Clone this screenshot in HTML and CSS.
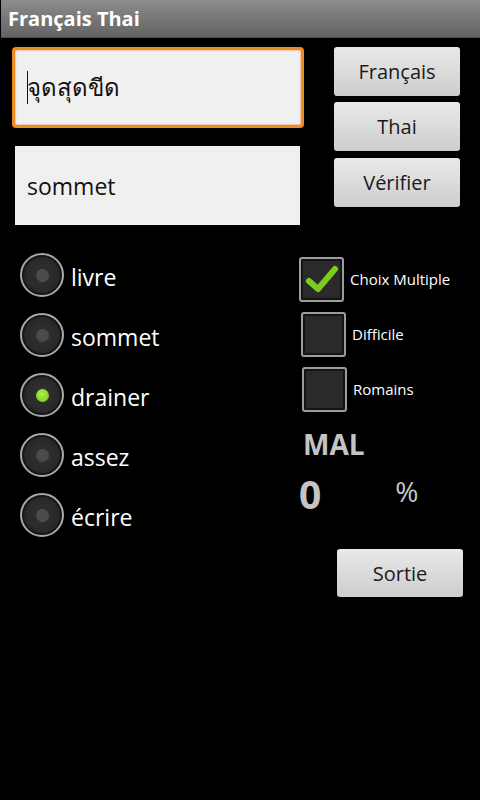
FILE: index.html
```html
<!DOCTYPE html>
<html lang="fr">
<head>
<meta charset="utf-8">
<title>Français Thai</title>
<link rel="stylesheet" href="styles.css">
</head>
<body>
<div class="titlebar">Français Thai</div>
<div class="top">
  <div class="fields">
    <div class="field focused"><span class="cursor"></span><span lang="th">จุดสุดขีด</span></div>
    <div class="field second">sommet</div>
  </div>
  <div class="buttons">
    <div class="btn">Français</div>
    <div class="btn">Thai</div>
    <div class="btn">Vérifier</div>
  </div>
</div>
<div class="middle">
  <div class="radios">
    <div class="radio-row"><span class="radio"><span class="dot"></span></span><span class="rlabel">livre</span></div>
    <div class="radio-row"><span class="radio"><span class="dot"></span></span><span class="rlabel">sommet</span></div>
    <div class="radio-row"><span class="radio"><span class="dot on"></span></span><span class="rlabel">drainer</span></div>
    <div class="radio-row"><span class="radio"><span class="dot"></span></span><span class="rlabel">assez</span></div>
    <div class="radio-row"><span class="radio"><span class="dot"></span></span><span class="rlabel">écrire</span></div>
  </div>
  <div class="side">
    <div class="check-row"><span class="box">
      <svg viewBox="0 0 45 45" width="45" height="45"><path d="M10 24 L19 32 L36 12" fill="none" stroke="#7ccc1c" stroke-width="6" stroke-linecap="round" stroke-linejoin="round"/></svg>
    </span><span class="clabel">Choix Multiple</span></div>
    <div class="check-row shift1"><span class="box"></span><span class="clabel">Difficile</span></div>
    <div class="check-row shift2"><span class="box"></span><span class="clabel">Romains</span></div>
    <div class="mal">MAL</div>
    <div class="score"><span class="zero">0</span><span class="pct">%</span></div>
    <div class="btn sortie">Sortie</div>
  </div>
</div>
</body>
</html>
```
FILE: styles.css
```css
html, body {
  margin: 0;
  padding: 0;
  background: #000;
}
body {
  width: 480px;
  height: 800px;
  font-family: "Open Sans", "Noto Sans", "DejaVu Sans", sans-serif;
  color: #fff;
  overflow: hidden;
}
.titlebar {
  height: 38px;
  box-sizing: border-box;
  margin-left: 1px;
  padding-left: 7px;
  background: linear-gradient(#8c8c8c, #636363);
  font-weight: bold;
  font-size: 20px;
  line-height: 38px;
  color: #fff;
  border-bottom: 1px solid #4a4a4a;
}
.top {
  display: flex;
  padding-top: 9px;
}
.fields {
  margin-left: 12px;
  width: 292px;
}
.field {
  box-sizing: border-box;
  background: #f0f0f0;
  color: #111;
  font-size: 23px;
  display: flex;
  align-items: center;
  padding-left: 12px;
}
.field.focused {
  height: 81px;
  border: 3px solid #f08a1c;
  border-radius: 4px;
  box-shadow: inset 0 0 2px #d07010;
  font-size: 24px;
}
.field.second {
  margin-top: 18px;
  margin-left: 3px;
  width: 285px;
  height: 79px;
}
.cursor {
  display: inline-block;
  width: 1px;
  height: 33px;
  background: #111;
  margin-right: -1px;
}
.buttons {
  margin-left: 30px;
  width: 126px;
  display: flex;
  flex-direction: column;
  gap: 6px;
}
.btn {
  height: 49px;
  box-sizing: border-box;
  background: linear-gradient(#e9e9e9, #cdcdcd);
  border-radius: 3px;
  color: #1a1a1a;
  font-size: 20px;
  display: flex;
  align-items: center;
  justify-content: center;
}
.buttons .btn:last-child {
  margin-top: 1px;
}
.middle {
  display: flex;
}
.radios {
  width: 299px;
  padding-left: 20px;
  box-sizing: border-box;
  padding-top: 20px;
}
.radio-row {
  height: 60px;
  display: flex;
  align-items: center;
}
.radio {
  width: 44px;
  height: 44px;
  box-sizing: border-box;
  border-radius: 50%;
  border: 2px solid #a8a8a8;
  background: radial-gradient(circle, #333 0%, #262626 70%, #1e1e1e 100%);
  box-shadow: inset 0 0 0 2px #151515;
  display: flex;
  align-items: center;
  justify-content: center;
}
.dot {
  width: 13px;
  height: 13px;
  border-radius: 50%;
  background: #4c4c4c;
}
.dot.on {
  background: radial-gradient(circle at 45% 40%, #aef04a, #7ed320 70%);
}
.rlabel {
  margin-left: 7px;
  font-size: 23px;
  color: #fff;
  padding-top: 3px;
}
.side {
  padding-top: 32px;
  flex: 1;
}
.check-row {
  height: 55px;
  display: flex;
  align-items: flex-start;
}
.check-row.shift1 { margin-left: 2px; }
.check-row.shift2 { margin-left: 3px; height: 54px; }
.box {
  width: 45px;
  height: 45px;
  box-sizing: border-box;
  border: 2px solid #9c9c9c;
  border-radius: 3px;
  background: #2a2a2a;
  box-shadow: inset 0 0 0 2px #141414;
  position: relative;
}
.box svg {
  position: absolute;
  left: -2px;
  top: -2px;
}
.clabel {
  margin-left: 6px;
  font-size: 15px;
  line-height: 45px;
  color: #fff;
}
.mal {
  margin-top: 6px;
  margin-left: 4px;
  font-weight: bold;
  font-size: 28px;
  color: #c4c4c4;
  line-height: 34px;
}
.score {
  display: flex;
  align-items: flex-start;
  margin-top: 10px;
}
.zero {
  font-weight: bold;
  font-size: 39px;
  color: #c4c4c4;
  line-height: 46px;
}
.pct {
  margin-left: 74px;
  margin-top: 1px;
  font-size: 28px;
  color: #c8c8c8;
}
.btn.sortie {
  margin-top: 32px;
  margin-left: 38px;
  width: 126px;
  height: 48px;
}
```
